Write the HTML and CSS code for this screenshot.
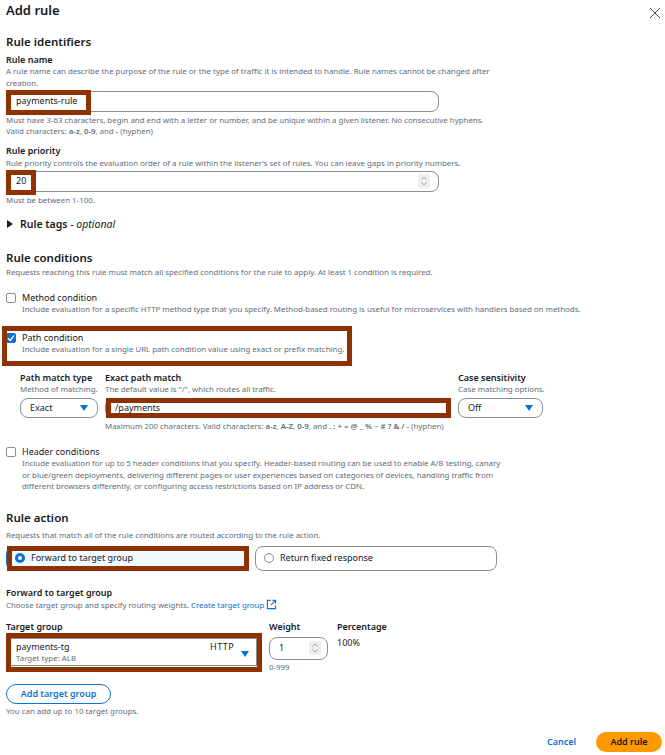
FILE: index.html
```html
<!DOCTYPE html>
<html lang="en">
<head>
    <meta charset="UTF-8">
    <meta name="viewport" content="width=device-width, initial-scale=1.0">
    <title>Add rule</title>
    <link rel="stylesheet" href="styles.css">
</head>
<body>
    <header class="modal-head">
        <h1>Add rule</h1>
        <svg class="close" viewBox="0 0 12 12" width="12" height="12"><path d="M1 1l10 10M11 1L1 11"/></svg>
    </header>

    <!-- Rule identifiers -->
    <section class="identifiers">
        <h2>Rule identifiers</h2>
        <div class="label name-label">Rule name</div>
        <p class="desc wide">A rule name can describe the purpose of the rule or the type of traffic it is intended to handle. Rule names cannot be changed after creation.</p>
        <div class="input name-input">
            <span>payments-rule</span>
            <i class="mark mark-name"></i>
        </div>
        <p class="desc hint">Must have 3-63 characters, begin and end with a letter or number, and be unique within a given listener. No consecutive hyphens.<br>Valid characters: <b>a-z</b>, <b>0-9</b>, and <b>-</b> (hyphen)</p>
        <div class="label priority-label">Rule priority</div>
        <p class="desc">Rule priority controls the evaluation order of a rule within the listener's set of rules. You can leave gaps in priority numbers.</p>
        <div class="input name-input priority-input">
            <span>20</span>
            <span class="spinner"><svg viewBox="0 0 8 12" width="8" height="12"><path d="M1.5 4.5L4 2l2.5 2.5M1.5 7.5L4 10l2.5-2.5"/></svg></span>
            <i class="mark mark-priority"></i>
        </div>
        <p class="desc hint">Must be between 1-100.</p>
        <div class="tags"><span class="caret"></span><span><span class="tags-title">Rule tags</span> - <em>optional</em></span></div>
    </section>

    <!-- Rule conditions -->
    <section class="conditions">
        <h2>Rule conditions</h2>
        <p class="desc conditions-desc">Requests reaching this rule must match all specified conditions for the rule to apply. At least 1 condition is required.</p>

        <div class="check method">
            <span class="box"></span>
            <div>
                <div class="check-title">Method condition</div>
                <p class="desc">Include evaluation for a specific HTTP method type that you specify. Method-based routing is useful for microservices with handlers based on methods.</p>
            </div>
        </div>

        <div class="check path">
            <span class="box checked"><svg viewBox="0 0 10 10" width="10" height="10"><path d="M2 5.2l2.2 2.2L8 2.6"/></svg></span>
            <div>
                <div class="check-title">Path condition</div>
                <p class="desc">Include evaluation for a single URL path condition value using exact or prefix matching.</p>
            </div>
            <i class="mark mark-path"></i>
        </div>

        <div class="path-fields">
            <div class="col-type">
                <div class="label">Path match type</div>
                <p class="desc">Method of matching.</p>
                <div class="input select"><span>Exact</span><span class="arrow"></span></div>
            </div>
            <div class="col-match">
                <div class="label">Exact path match</div>
                <p class="desc">The default value is "/", which routes all traffic.</p>
                <div class="input match-input">
                    <span>/payments</span>
                    <i class="mark mark-match"></i>
                </div>
                <p class="desc hint">Maximum 200 characters. Valid characters: <b>a-z</b>, <b>A-Z</b>, <b>0-9</b>, and <b>. : + = @ _ % ~ # ? &amp; /</b> <b>-</b> (hyphen)</p>
            </div>
            <div class="col-case">
                <div class="label">Case sensitivity</div>
                <p class="desc">Case matching options.</p>
                <div class="input select"><span>Off</span><span class="arrow"></span></div>
            </div>
        </div>

        <div class="check header">
            <span class="box"></span>
            <div>
                <div class="check-title">Header conditions</div>
                <p class="desc header-desc">Include evaluation for up to 5 header conditions that you specify. Header-based routing can be used to enable A/B testing, canary or blue/green deployments, delivering different pages or user experiences based on categories of devices, handling traffic from different browsers differently, or configuring access restrictions based on IP address or CDN.</p>
            </div>
        </div>
    </section>

    <!-- Rule action -->
    <section class="action">
        <h2>Rule action</h2>
        <p class="desc action-desc">Requests that match all of the rule conditions are routed according to the rule action.</p>
        <div class="radios">
            <div class="radio-card selected">
                <span class="radio on"></span><span>Forward to target group</span>
                <i class="mark mark-forward"></i>
            </div>
            <div class="radio-card">
                <span class="radio"></span><span>Return fixed response</span>
            </div>
        </div>

        <div class="label forward-label">Forward to target group</div>
        <p class="desc">Choose target group and specify routing weights. <a class="link">Create target group</a>
            <svg class="ext" viewBox="0 0 12 12" width="11" height="11"><path d="M5 1.5H1.5v9h9V7M7 1.5h3.5V5M10.5 1.5L5.5 6.5"/></svg></p>

        <div class="targets">
            <div class="col-group">
                <div class="label">Target group</div>
                <div class="group-select">
                    <div class="group-main"><span>payments-tg</span><span class="proto">HTTP</span></div>
                    <div class="desc">Target type: ALB</div>
                    <span class="arrow"></span>
                    <i class="mark mark-group"></i>
                </div>
            </div>
            <div class="col-weight">
                <div class="label">Weight</div>
                <div class="input weight-input">
                    <span>1</span>
                    <span class="spinner"><svg viewBox="0 0 8 12" width="8" height="12"><path d="M1.5 4.5L4 2l2.5 2.5M1.5 7.5L4 10l2.5-2.5"/></svg></span>
                </div>
                <p class="desc weight-hint">0-999</p>
            </div>
            <div class="col-percent">
                <div class="label">Percentage</div>
                <div class="percent">100%</div>
            </div>
        </div>

        <div class="btn add-group">Add target group</div>
        <p class="desc add-hint">You can add up to 10 target groups.</p>
    </section>

    <footer class="modal-foot">
        <a class="link cancel">Cancel</a>
        <div class="btn primary">Add rule</div>
    </footer>
</body>
</html>
```

FILE: styles.css
```css
* {
    box-sizing: border-box;
}
body {
    margin: 0;
    padding: 0 3px 0 6px;
    width: 665px;
    height: 755px;
    overflow: hidden;
    background: #fff;
    color: #16191f;
    font-family: "Noto Sans", sans-serif;
    font-size: 9px;
    line-height: 12px;
}
h1, h2, p {
    margin: 0;
}
h1 {
    font-size: 13px;
    line-height: 20px;
    font-weight: 600;
}
h2 {
    font-size: 11.5px;
    line-height: 16px;
    font-weight: 600;
}
.modal-head {
    display: flex;
    justify-content: space-between;
    height: 34px;
}
.close {
    margin: 7px 1px 0 0;
    fill: none;
    stroke: #414750;
    stroke-width: 1;
}
.label {
    font-size: 9px;
    line-height: 12px;
    font-weight: 600;
}
.name-label {
    margin-top: 4px;
}
.desc {
    font-size: 7.88px;
    line-height: 11.8px;
    color: #5f6b7a;
}
.desc b {
    font-weight: 600;
}
.wide {
    width: 490px;
}
.hint {
    margin-top: 3px;
}
.input {
    position: relative;
    display: flex;
    align-items: center;
    border: 1px solid #8c8c94;
    border-radius: 8px;
    background: #fff;
}
.name-input {
    width: 433px;
    height: 21px;
    padding-left: 9px;
    margin-top: 1px;
}
.mark {
    position: absolute;
    border: 5px solid #8f3200;
    pointer-events: none;
}
.mark-name {
    left: -1px;
    top: -2px;
    width: 85px;
    height: 25px;
}
.mark-priority {
    left: -1px;
    top: -2px;
    width: 30px;
    height: 25px;
}
.spinner {
    display: flex;
    flex: none;
    margin-left: auto;
    margin-right: 8px;
    background: #eceef0;
    height: 14px;
    align-items: center;
    padding: 0 2px;
}
.spinner svg {
    fill: none;
    stroke: #8c8c94;
    stroke-width: 0.8;
}
.priority-label {
    margin: 7px 0 1px;
}
.tags {
    display: flex;
    align-items: center;
    margin-top: 11px;
    font-size: 10.5px;
}
.caret {
    width: 0;
    height: 0;
    border-left: 6px solid #16191f;
    border-top: 4px solid transparent;
    border-bottom: 4px solid transparent;
    margin: 0 7px 0 1px;
}
.tags-title {
    font-weight: 600;
}
.conditions {
    margin-top: 20px;
}
.conditions-desc {
    margin-top: 1px;
}
.check {
    position: relative;
    display: flex;
    gap: 6px;
}
.box {
    flex: none;
    width: 10px;
    height: 10px;
    margin-top: 1px;
    border: 1px solid #8c8c94;
    border-radius: 2px;
    background: #fff;
}
.box.checked {
    border-color: #0972d3;
    background: #0972d3;
    display: flex;
}
.box.checked svg {
    margin: -1px;
    fill: none;
    stroke: #fff;
    stroke-width: 1.4;
}
.check-title {
    font-size: 9px;
    line-height: 12px;
}
.method {
    margin-top: 13px;
}
.path {
    margin-top: 17px;
}
.mark-path {
    left: -4px;
    top: -6px;
    width: 350px;
    height: 40px;
}
.path-fields {
    display: flex;
    margin: 16px 0 0 14px;
}
.col-type {
    width: 85px;
}
.col-match {
    width: 353px;
}
.col-case {
    width: 90px;
}
.select {
    width: 78px;
    height: 20px;
    margin-top: 2px;
    padding: 0 9px;
    justify-content: space-between;
}
.col-case .select {
    width: 85px;
}
.arrow {
    width: 0;
    height: 0;
    border-top: 6px solid #0972d3;
    border-left: 4px solid transparent;
    border-right: 4px solid transparent;
}
.match-input {
    width: 345px;
    height: 20px;
    margin-top: 2px;
    padding-left: 9px;
}
.mark-match {
    left: 0;
    top: -1px;
    width: 345px;
    height: 20px;
}
.header {
    margin-top: 13px;
}
.header-desc {
    width: 480px;
}
.action {
    margin-top: 17px;
}
.action-desc {
    margin-top: 4px;
}
.radios {
    display: flex;
    gap: 7px;
    margin-top: 4px;
}
.radio-card {
    position: relative;
    display: flex;
    align-items: center;
    gap: 6px;
    width: 242px;
    height: 25px;
    padding-left: 8px;
    border: 1px solid #8c8c94;
    border-radius: 8px;
    font-size: 9px;
}
.radio-card.selected {
    border: 1px solid #0972d3;
    background: #f1faff;
}
.radio {
    width: 10px;
    height: 10px;
    border: 1px solid #8c8c94;
    border-radius: 50%;
}
.radio.on {
    border: 3px solid #0972d3;
}
.mark-forward {
    left: 0;
    top: -1px;
    width: 242px;
    height: 25px;
}
.forward-label {
    margin-top: 16px;
}
.link {
    color: #0972d3;
}
.ext {
    vertical-align: -2px;
    fill: none;
    stroke: #0972d3;
    stroke-width: 1.2;
}
.targets {
    display: flex;
    margin-top: 9px;
}
.col-group {
    width: 263px;
}
.group-select {
    position: relative;
    width: 251px;
    height: 28px;
    margin-top: 5px;
    padding: 2px 9px;
    border: 1px solid #8c8c94;
}
.group-main {
    display: flex;
    justify-content: space-between;
    padding-right: 13px;
}
.proto {
    letter-spacing: 0.4px;
}
.group-select .arrow {
    position: absolute;
    right: 7px;
    top: 12px;
}
.mark-group {
    left: -1px;
    top: -6px;
    width: 256px;
    height: 39px;
}
.col-weight {
    width: 68px;
}
.weight-input {
    width: 59px;
    height: 23px;
    margin-top: 4px;
    padding-left: 9px;
}
.weight-input .spinner {
    margin-right: 6px;
}
.weight-hint {
    margin-top: 2px;
}
.percent {
    margin-top: 4px;
}
.btn {
    display: flex;
    align-items: center;
    justify-content: center;
    border-radius: 10px;
    font-weight: 600;
    height: 20px;
}
.add-group {
    width: 105px;
    margin-top: 10px;
    border: 1px solid #0972d3;
    color: #0972d3;
}
.add-hint {
    margin-top: 2px;
}
.modal-foot {
    display: flex;
    justify-content: flex-end;
    align-items: center;
    gap: 20px;
    margin-top: 15px;
}
.cancel {
    font-weight: 600;
}
.primary {
    width: 66px;
    background: #ff9900;
    color: #16191f;
}
```
